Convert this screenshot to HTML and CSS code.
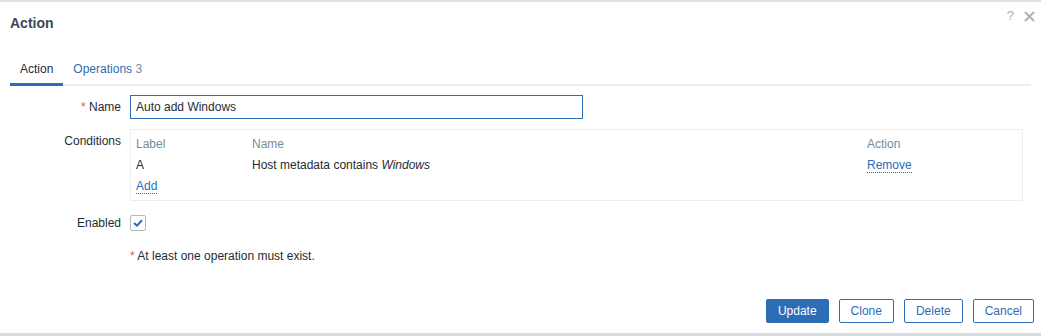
FILE: index.html
```html
<!DOCTYPE html>
<html lang="en">
<head>
    <meta charset="UTF-8">
    <meta name="viewport" content="width=device-width, initial-scale=1.0">
    <title>Action</title>
    <link rel="stylesheet" href="styles.css">
</head>
<body>
    <div class="overlay">
        <div class="dialog">
            <div class="dialog-head">
                <h4>Action</h4>
                <div class="head-tools">
                    <span class="tool">?</span>
                    <span class="tool">
                        <svg width="11" height="11" viewBox="0 0 11 11"><path d="M1 1L10 10M10 1L1 10" stroke="#a8b3bb" stroke-width="2" fill="none"/></svg>
                    </span>
                </div>
            </div>

            <ul class="tabs">
                <li class="tab active">Action</li>
                <li class="tab"><a href="#">Operations</a> <sup class="count">3</sup></li>
            </ul>

            <div class="form">
                <label class="form-label"><span class="req">*</span> Name</label>
                <div class="form-field">
                    <input type="text" class="name-input" value="Auto add Windows">
                </div>

                <label class="form-label">Conditions</label>
                <div class="form-field">
                    <div class="conditions">
                        <div class="cond-row cond-head">
                            <span>Label</span>
                            <span>Name</span>
                            <span>Action</span>
                        </div>
                        <div class="cond-row">
                            <span>A</span>
                            <span>Host metadata contains <em>Windows</em></span>
                            <span><a href="#" class="link-action">Remove</a></span>
                        </div>
                        <div class="cond-row">
                            <span><a href="#" class="link-action">Add</a></span>
                        </div>
                    </div>
                </div>

                <label class="form-label enabled-label">Enabled</label>
                <div class="form-field enabled-field">
                    <span class="checkbox">
                        <svg width="10" height="8" viewBox="0 0 10 8"><path d="M1 4L4 6.6L9 1.2" stroke="#2d6db5" stroke-width="2" fill="none"/></svg>
                    </span>
                </div>

                <div></div>
                <div class="form-field notice"><span class="req">*</span> At least one operation must exist.</div>
            </div>

            <div class="dialog-foot">
                <button class="btn primary">Update</button>
                <button class="btn">Clone</button>
                <button class="btn">Delete</button>
                <button class="btn">Cancel</button>
            </div>
        </div>
    </div>
</body>
</html>
```

FILE: styles.css
```css
body {
    margin: 0;
    padding: 0;
    font-family: "Liberation Sans", Arial, sans-serif;
    font-size: 12px;
    line-height: 14px;
    color: #1f2c33;
    background: #d7dce0;
}
.overlay {
    height: 336px;
    overflow: hidden;
}
.dialog {
    background: #fff;
    border-top: 2px solid #dde2e6;
    height: 331px;
    position: relative;
}
.dialog-head {
    padding: 13px 10px 24px;
}
.dialog-head h4 {
    margin: 0;
    font-size: 14px;
    line-height: 16px;
    font-weight: bold;
    color: #3b4a56;
}
.head-tools {
    position: absolute;
    top: 7px;
    right: 6px;
    display: flex;
    align-items: center;
    gap: 10px;
}
.tool {
    color: #a8b3bb;
    font-size: 13px;
    display: flex;
    align-items: center;
    height: 14px;
}
.tabs {
    list-style: none;
    margin: 0 10px;
    padding: 0;
    display: flex;
    border-bottom: 2px solid #ebeef0;
}
.tab {
    padding: 7px 10px 7px;
    border-bottom: 3px solid transparent;
    margin-bottom: -2px;
}
.tab.active {
    border-bottom-color: #2d6db5;
}
.tab a {
    color: #2d6db5;
    text-decoration: none;
}
.count {
    color: #768d99;
    font-size: 12px;
    vertical-align: baseline;
}
.form {
    display: grid;
    grid-template-columns: 111px 1fr;
    column-gap: 9px;
    row-gap: 10px;
    padding: 9px 18px 0 10px;
}
.form-label {
    text-align: right;
    padding-top: 5px;
}
.req {
    color: #e45959;
}
.name-input {
    width: 453px;
    height: 24px;
    box-sizing: border-box;
    border: 1px solid #2d6db5;
    padding: 0 5px;
    font-family: inherit;
    font-size: 12px;
    color: #1f2c33;
    outline: none;
    margin: 0;
}
.conditions {
    border: 1px solid #ebeef0;
    padding: 3px 5px 4px;
}
.cond-row {
    display: grid;
    grid-template-columns: 116px 1fr 150px;
    padding: 4px 0 3px;
}
.cond-head {
    color: #768d99;
}
.link-action {
    color: #2d6db5;
    text-decoration: none;
    border-bottom: 1px dotted #2d6db5;
}
.enabled-field {
    height: 24px;
    display: flex;
    align-items: center;
}
.checkbox {
    width: 14px;
    height: 14px;
    border: 1px solid #acbbc2;
    border-radius: 2px;
    display: flex;
    align-items: center;
    justify-content: center;
}
.notice {
    margin-top: 4px;
}
.dialog-foot {
    position: absolute;
    right: 7px;
    bottom: 10px;
    display: flex;
    gap: 10px;
}
.btn {
    height: 24px;
    padding: 0 11px;
    font-family: inherit;
    font-size: 12px;
    background: #fff;
    color: #2d6db5;
    border: 1px solid #2d6db5;
    border-radius: 2px;
    cursor: pointer;
}
.btn.primary {
    background: #2d6db5;
    color: #fff;
}
```
